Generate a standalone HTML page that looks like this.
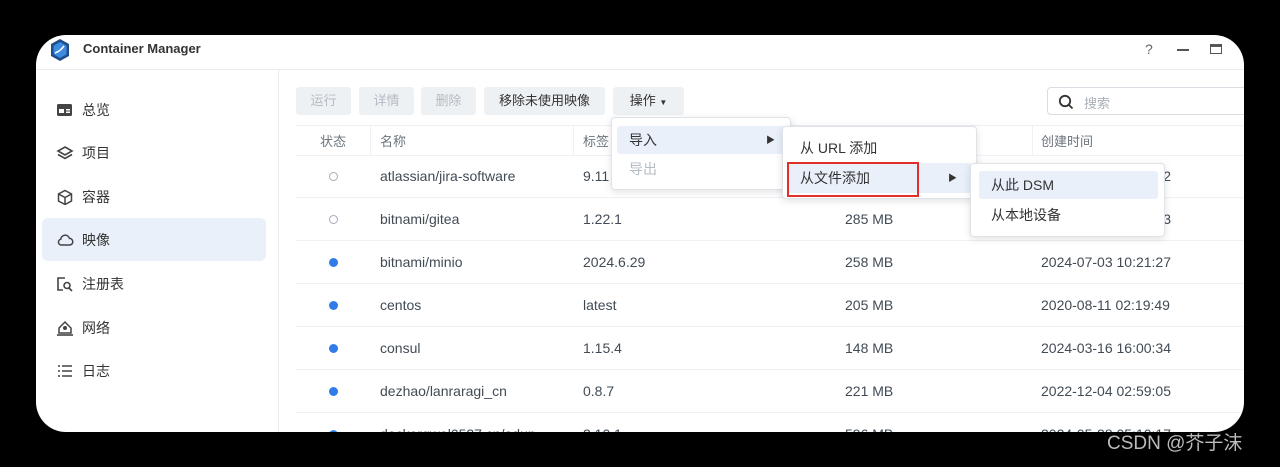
<!DOCTYPE html><html><head><meta charset="utf-8"><style>
*{margin:0;padding:0;box-sizing:border-box}
body{width:1280px;height:467px;background:#000;position:relative;overflow:hidden;font-family:"Liberation Sans","Noto Sans CJK SC",sans-serif;color:#333;font-size:14px}
.card{position:absolute;left:36px;top:35px;width:1208px;height:397px;background:#fff;border-radius:30px;overflow:hidden}
.a{position:absolute;white-space:nowrap}
.btn{position:absolute;top:52px;height:28px;background:#eef1f4;border-radius:3px;font-size:13px;line-height:28px;text-align:center}
.dis{color:#b4bbc3}
.row{position:absolute;left:260px;width:960px;height:43px;border-bottom:1px solid #eef1f5}
.row span{position:absolute;top:13px;font-size:14px;color:#414b55}
.dot{position:absolute;left:33px;top:17px;width:9px;height:9px;border-radius:50%;background:#2f7be8}
.odot{position:absolute;left:33px;top:17px;width:9px;height:9px;border-radius:50%;border:1.5px solid #aab}
.side{position:absolute;left:20px;font-size:14px;color:#333}
.menu{position:absolute;background:#fff;border:1px solid #dfe3e8;border-radius:4px;box-shadow:0 2px 8px rgba(0,0,0,.12)}
.mi{position:absolute;height:28px;line-height:28px;padding-left:12px;font-size:14px;border-radius:3px}
</style></head><body>
<div class="card">
 <svg class="a" style="left:13px;top:3px" width="22" height="24" viewBox="0 0 22 24"><path d="M11 1l9 5v12l-9 5-9-5V6z" fill="#1e4f8a"/><path d="M11 4l6.5 3.7v8.6L11 20l-6.5-3.7V7.7z" fill="#3d8be0"/><path d="M6 15c3-1 6-3 9-7" stroke="#fff" stroke-width="1.5" fill="none"/></svg>
 <div class="a" style="left:47px;top:6px;font-weight:bold;font-size:13px;color:#333">Container Manager</div>
 <div class="a" style="left:1109px;top:6px;color:#666;font-size:14px">?</div>
 <div class="a" style="left:1141px;top:14px;width:12px;height:1.5px;background:#555"></div>
 <div class="a" style="left:1174px;top:9px;width:12px;height:10px;border:1.5px solid #555;border-top-width:3px"></div>
 <div class="a" style="left:0;top:34px;width:1208px;height:1px;background:#e8ebef"></div>
 <div class="a" style="left:242px;top:35px;width:1px;height:362px;background:#e8ebef"></div>
 <div class="a" style="left:6px;top:183px;width:224px;height:43px;background:#e9f0fa;border-radius:6px"></div>
 <div class="side" style="top:65px"><svg width="18" height="16" style="vertical-align:-3px;margin-right:8px"><rect x="1" y="2" width="15" height="12" rx="1.5" fill="#444"/><rect x="3" y="7" width="5" height="4" fill="#fff"/><rect x="10" y="7" width="4" height="1.5" fill="#fff"/><rect x="10" y="9.5" width="4" height="1.5" fill="#fff"/></svg>总览</div>
 <div class="side" style="top:108px"><svg width="18" height="16" style="vertical-align:-3px;margin-right:8px"><path d="M9 2l7 4-7 4-7-4z M2 9.5l7 4 7-4" stroke="#444" stroke-width="1.6" fill="none"/></svg>项目</div>
 <div class="side" style="top:152px"><svg width="18" height="16" style="vertical-align:-3px;margin-right:8px"><path d="M9 1.5l6.5 3.5v7L9 15.5 2.5 12V5z M2.5 5L9 8.5 15.5 5 M9 8.5v7" stroke="#444" stroke-width="1.5" fill="none"/></svg>容器</div>
 <div class="side" style="top:195px"><svg width="18" height="16" style="vertical-align:-3px;margin-right:8px"><path d="M5 13h8.5a3.3 3.3 0 0 0 0-6.6A4.5 4.5 0 0 0 4.7 7.3 2.9 2.9 0 0 0 5 13z" stroke="#444" stroke-width="1.5" fill="none"/></svg>映像</div>
 <div class="side" style="top:239px"><svg width="18" height="16" style="vertical-align:-3px;margin-right:8px"><path d="M9 2H2v12h5" stroke="#444" stroke-width="1.6" fill="none"/><circle cx="11" cy="9.5" r="3" stroke="#444" stroke-width="1.6" fill="none"/><path d="M13 12l3 3" stroke="#444" stroke-width="1.6"/></svg>注册表</div>
 <div class="side" style="top:283px"><svg width="18" height="16" style="vertical-align:-3px;margin-right:8px"><path d="M3 8L9 2l6 6v5H3z" stroke="#444" stroke-width="1.5" fill="none"/><circle cx="9" cy="8" r="2" fill="#444"/><path d="M1 15h16" stroke="#444" stroke-width="1.6"/></svg>网络</div>
 <div class="side" style="top:326px"><svg width="18" height="16" style="vertical-align:-3px;margin-right:8px"><path d="M2 3h2M6 3h10M2 8h2M6 8h10M2 13h2M6 13h10" stroke="#444" stroke-width="1.6"/></svg>日志</div>
 <div class="btn dis" style="left:260px;width:55px">运行</div>
 <div class="btn dis" style="left:323px;width:55px">详情</div>
 <div class="btn dis" style="left:385px;width:55px">删除</div>
 <div class="btn" style="left:448px;width:121px">移除未使用映像</div>
 <div class="btn" style="left:577px;width:71px">操作 <span style="font-size:8px">▼</span></div>
 <div class="a" style="left:1011px;top:52px;width:210px;height:28px;border:1px solid #d9dee4;border-radius:4px"><svg style="position:absolute;left:10px;top:6px" width="16" height="16"><circle cx="7" cy="7" r="5.2" stroke="#333" stroke-width="1.8" fill="none"/><path d="M10.5 10.5l4 4" stroke="#333" stroke-width="1.8"/></svg><span style="position:absolute;left:36px;top:5px;font-size:13px;color:#a9b0b8">搜索</span></div>
 <div class="a" style="left:260px;top:90px;width:960px;height:31px;border-bottom:1px solid #eef1f5;border-top:1px solid #eef1f5"></div>
 <div class="a" style="left:334px;top:91px;width:1px;height:30px;background:#eef1f5"></div>
 <div class="a" style="left:537px;top:91px;width:1px;height:30px;background:#eef1f5"></div>
 <div class="a" style="left:996px;top:91px;width:1px;height:30px;background:#eef1f5"></div>
 <div class="a" style="left:284px;top:96px;font-size:13px;color:#6b747d">状态</div>
 <div class="a" style="left:344px;top:96px;font-size:13px;color:#6b747d">名称</div>
 <div class="a" style="left:547px;top:96px;font-size:13px;color:#6b747d">标签</div>
 <div class="a" style="left:1005px;top:96px;font-size:13px;color:#6b747d">创建时间</div>
 <div class="row" style="top:120px"><i class="odot"></i><span style="left:84px">atlassian/jira-software</span><span style="left:287px">9.11</span><span style="left:745px">2024-05-23 08:45:12</span></div>
 <div class="row" style="top:163px"><i class="odot"></i><span style="left:84px">bitnami/gitea</span><span style="left:287px">1.22.1</span><span style="left:549px">285 MB</span><span style="left:745px">2024-07-01 08:35:43</span></div>
 <div class="row" style="top:206px"><i class="dot"></i><span style="left:84px">bitnami/minio</span><span style="left:287px">2024.6.29</span><span style="left:549px">258 MB</span><span style="left:745px">2024-07-03 10:21:27</span></div>
 <div class="row" style="top:249px"><i class="dot"></i><span style="left:84px">centos</span><span style="left:287px">latest</span><span style="left:549px">205 MB</span><span style="left:745px">2020-08-11 02:19:49</span></div>
 <div class="row" style="top:292px"><i class="dot"></i><span style="left:84px">consul</span><span style="left:287px">1.15.4</span><span style="left:549px">148 MB</span><span style="left:745px">2024-03-16 16:00:34</span></div>
 <div class="row" style="top:335px"><i class="dot"></i><span style="left:84px">dezhao/lanraragi_cn</span><span style="left:287px">0.8.7</span><span style="left:549px">221 MB</span><span style="left:745px">2022-12-04 02:59:05</span></div>
 <div class="row" style="top:378px"><i class="dot"></i><span style="left:84px">dockerqwel0527.cn/adup</span><span style="left:287px">2.10.1</span><span style="left:549px">596 MB</span><span style="left:745px">2024-05-28 05:10:17</span></div>
 <div class="menu" style="left:575px;top:82px;width:180px;height:73px">
  <div class="mi" style="left:5px;top:8px;width:168px;background:#e9f0fa">导入<span style="position:absolute;right:10px;font-size:9px">▶</span></div>
  <div class="mi" style="left:5px;top:37px;color:#b4bbc3">导出</div>
 </div>
 <div class="menu" style="left:746px;top:91px;width:195px;height:73px">
  <div class="mi" style="left:5px;top:7px">从 URL 添加</div>
  <div class="mi" style="left:5px;top:36px;width:183px;height:30px;line-height:30px;background:#e9f0fa">从文件添加<span style="position:absolute;right:14px;font-size:9px">▶</span></div>
 </div>
 <div class="a" style="left:751px;top:127px;width:132px;height:35px;border:2px solid #e0302a"></div>
 <div class="menu" style="left:934px;top:128px;width:195px;height:74px">
  <div class="mi" style="left:8px;top:7px;width:179px;background:#e9f0fa">从此 DSM</div>
  <div class="mi" style="left:8px;top:37px">从本地设备</div>
 </div>
</div>
<div class="a" style="left:1107px;top:428px;font-size:19px;color:#bbb">CSDN @芥子沫</div>
</body></html>
